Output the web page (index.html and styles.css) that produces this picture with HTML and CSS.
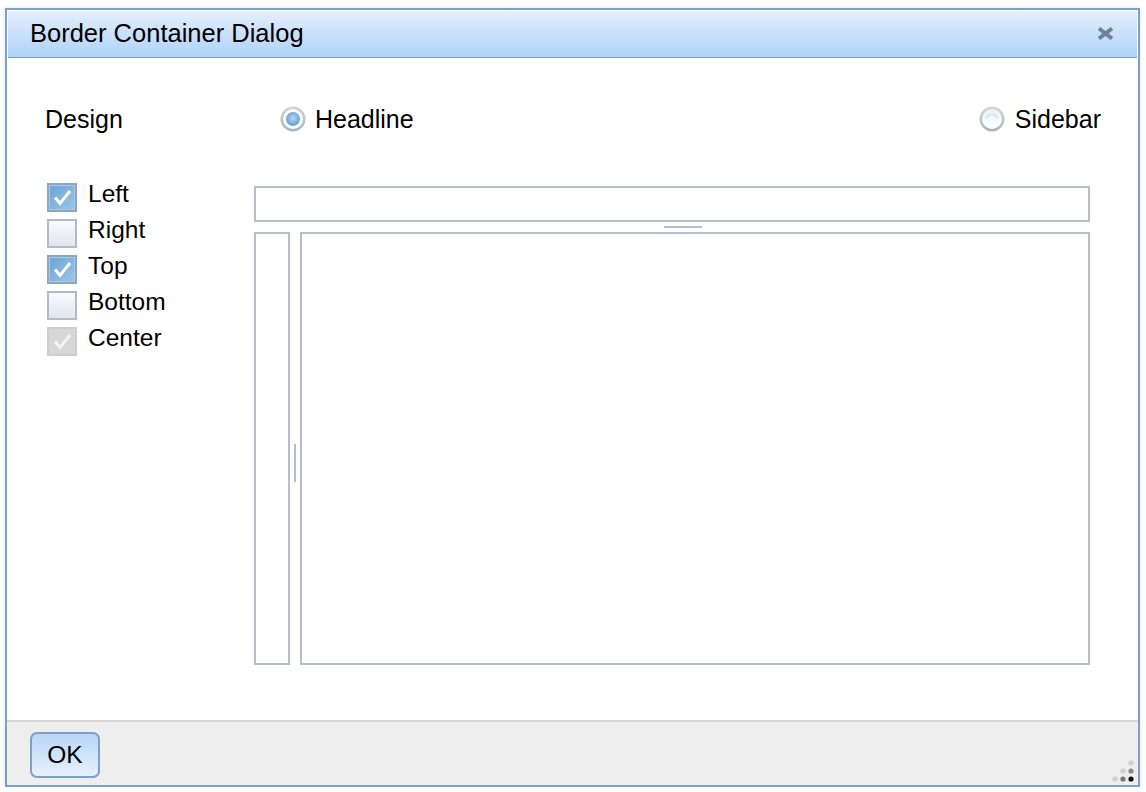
FILE: index.html
```html
<!DOCTYPE html>
<html lang="en">
<head>
<meta charset="utf-8">
<title>Border Container Dialog</title>
<link rel="stylesheet" href="styles.css">
</head>
<body>
<div class="dialog">
  <div class="titlebar">
    <span class="title">Border Container Dialog</span>
    <svg class="close" width="17" height="13" viewBox="0 0 17 13"><path d="M2 1.5 L15 11.5 M15 1.5 L2 11.5" stroke="#6f8297" stroke-width="4" stroke-linecap="butt"/></svg>
  </div>
  <div class="content">
    <div class="design-row">
      <span class="design-label">Design</span>
      <label class="radio-opt">
        <svg class="radio" width="26" height="26" viewBox="0 0 26 26">
          <defs>
            <linearGradient id="ring" x1="0" y1="0" x2="0" y2="1"><stop offset="0" stop-color="#cfd5dc"/><stop offset="1" stop-color="#a9b2be"/></linearGradient>
            <radialGradient id="dot" cx="0.5" cy="0.45" r="0.5"><stop offset="0" stop-color="#b8d6f2"/><stop offset="0.55" stop-color="#8dbbe2"/><stop offset="1" stop-color="#6aa2d2"/></radialGradient>
            <linearGradient id="inner" x1="0" y1="0" x2="0" y2="1"><stop offset="0" stop-color="#e9eff6"/><stop offset="1" stop-color="#ffffff"/></linearGradient>
          </defs>
          <circle cx="13" cy="13" r="12.5" fill="url(#ring)"/>
          <circle cx="13" cy="13" r="10" fill="#fbfcfd"/>
          <circle cx="13" cy="13" r="7" fill="url(#dot)"/>
        </svg>
        <span>Headline</span>
      </label>
      <label class="radio-opt sidebar-opt">
        <svg class="radio" width="26" height="26" viewBox="0 0 26 26">
          <circle cx="13" cy="13" r="12.5" fill="url(#ring)"/>
          <circle cx="13" cy="13" r="10" fill="url(#inner)"/>
          <path d="M7.5 12 A6 6 0 0 1 18.5 12" stroke="#d7e4f1" stroke-width="2" fill="none"/>
        </svg>
        <span>Sidebar</span>
      </label>
    </div>
    <div class="main">
      <ul class="regions">
        <li class="region"><span class="cb checked"><svg width="25" height="25" viewBox="0 0 25 25"><path d="M5 12.5 L10 18.5 L20 6" stroke="#fff" stroke-width="3" fill="none"/></svg></span><span class="cb-label">Left</span></li>
        <li class="region"><span class="cb"></span><span class="cb-label">Right</span></li>
        <li class="region"><span class="cb checked"><svg width="25" height="25" viewBox="0 0 25 25"><path d="M5 12.5 L10 18.5 L20 6" stroke="#fff" stroke-width="3" fill="none"/></svg></span><span class="cb-label">Top</span></li>
        <li class="region"><span class="cb"></span><span class="cb-label">Bottom</span></li>
        <li class="region"><span class="cb disabled"><svg width="25" height="25" viewBox="0 0 25 25"><path d="M5 12.5 L10 18.5 L20 6" stroke="#f4f4f4" stroke-width="3" fill="none"/></svg></span><span class="cb-label">Center</span></li>
      </ul>
      <div class="preview">
        <div class="pane pane-top"></div>
        <div class="hsplit"><span class="hhandle"></span></div>
        <div class="preview-body">
          <div class="pane pane-left"></div>
          <div class="vsplit"><span class="vhandle"></span></div>
          <div class="pane pane-center"></div>
        </div>
      </div>
    </div>
  </div>
  <div class="footer">
    <button class="ok" type="button">OK</button>
  </div>
  <svg class="grip" width="24" height="24" viewBox="0 0 24 24">
    <circle cx="20" cy="4" r="2.6" fill="#d0d0d0"/>
    <circle cx="12" cy="12" r="2.6" fill="#d0d0d0"/>
    <circle cx="20" cy="12" r="2.6" fill="#8a8a8a"/>
    <circle cx="4" cy="20" r="2.6" fill="#d0d0d0"/>
    <circle cx="12" cy="20" r="2.6" fill="#777"/>
    <circle cx="20" cy="20" r="2.6" fill="#111"/>
  </svg>
</div>
</body>
</html>
```

FILE: styles.css
```css
* { box-sizing: border-box; }
html, body { margin: 0; padding: 0; background: #fff; }
body {
  font-family: "Liberation Sans", Arial, sans-serif;
  color: #000;
  padding: 8px 0 0 5px;
}
.dialog {
  position: relative;
  width: 1135px;
  height: 779px;
  border: 2px solid #7ca0c6;
  background: #fff;
  display: flex;
  flex-direction: column;
  box-shadow: 0 0 4px rgba(0,0,0,0.12);
}
.titlebar {
  margin: 1px 1px 0 1px;
  height: 47px;
  border-bottom: 1px solid #7ca0c6;
  background: linear-gradient(#e5effc, #aed2f9);
  display: flex;
  align-items: center;
  justify-content: space-between;
  padding: 0 23px 3px 22px;
  flex: none;
}
.title { font-size: 25.5px; line-height: 30px; }
.close { display: block; margin-top: 2px; }
.content {
  height: 662px;
  flex: none;
  padding: 46px 37px 0 38px;
}
.design-row {
  display: flex;
  align-items: center;
  height: 30px;
  font-size: 25px;
}
.design-label { width: 235px; }
.radio-opt { display: flex; align-items: center; gap: 9px; }
.sidebar-opt { gap: 10px; }
.radio { display: block; flex: none; }
.sidebar-opt { margin-left: auto; }
.main {
  display: flex;
  margin-top: 49px;
  padding-left: 2px;
}
.regions {
  list-style: none;
  margin: 0;
  padding: 0;
  width: 207px;
  display: flex;
  flex-direction: column;
  gap: 7px;
}
.region {
  display: flex;
  align-items: flex-start;
  gap: 11px;
  height: 29px;
  font-size: 24.5px;
}
.cb-label { line-height: 22px; }
.cb {
  width: 30px;
  height: 29px;
  flex: none;
  border: 2px solid #b4bac4;
  background: linear-gradient(#fafbfd, #dfe6ef);
  display: flex;
  align-items: center;
  justify-content: center;
}
.cb.checked {
  border-color: #8ea5bf;
  background: linear-gradient(135deg, #6ba4d6, #9cc5e8);
  box-shadow: inset 0 0 0 1px #a9cbea;
}
.cb.disabled {
  border-color: #cdcdcd;
  background: #d7d7d7;
}
.cb svg { display: block; }
.preview {
  width: 836px;
  margin-top: 3px;
  display: flex;
  flex-direction: column;
}
.pane { border: 2px solid #b9bdca; background: #fff; }
.pane-top { height: 36px; }
.hsplit { height: 10px; padding: 4px 0 0 410px; }
.hhandle { display: block; width: 38px; height: 2px; background: #b9bdca; }
.preview-body { display: flex; height: 433px; }
.pane-left { width: 36px; }
.vsplit { width: 10px; padding: 212px 0 0 4px; }
.vhandle { display: block; width: 2px; height: 38px; background: #b9bdca; }
.pane-center { flex: 1; }
.footer {
  flex: 1;
  border-top: 2px solid #d6d6d6;
  background: #eeeeee;
  padding: 10px 0 0 23px;
}
.ok {
  width: 70px;
  height: 46px;
  border: 2px solid #7ca0c6;
  border-radius: 7px;
  background: linear-gradient(#b8d6f6, #e7f1fd);
  font-family: "Liberation Sans", Arial, sans-serif;
  font-size: 24.5px;
  color: #000;
  padding: 0;
}
.grip {
  position: absolute;
  right: 3px;
  bottom: 2px;
}
```
